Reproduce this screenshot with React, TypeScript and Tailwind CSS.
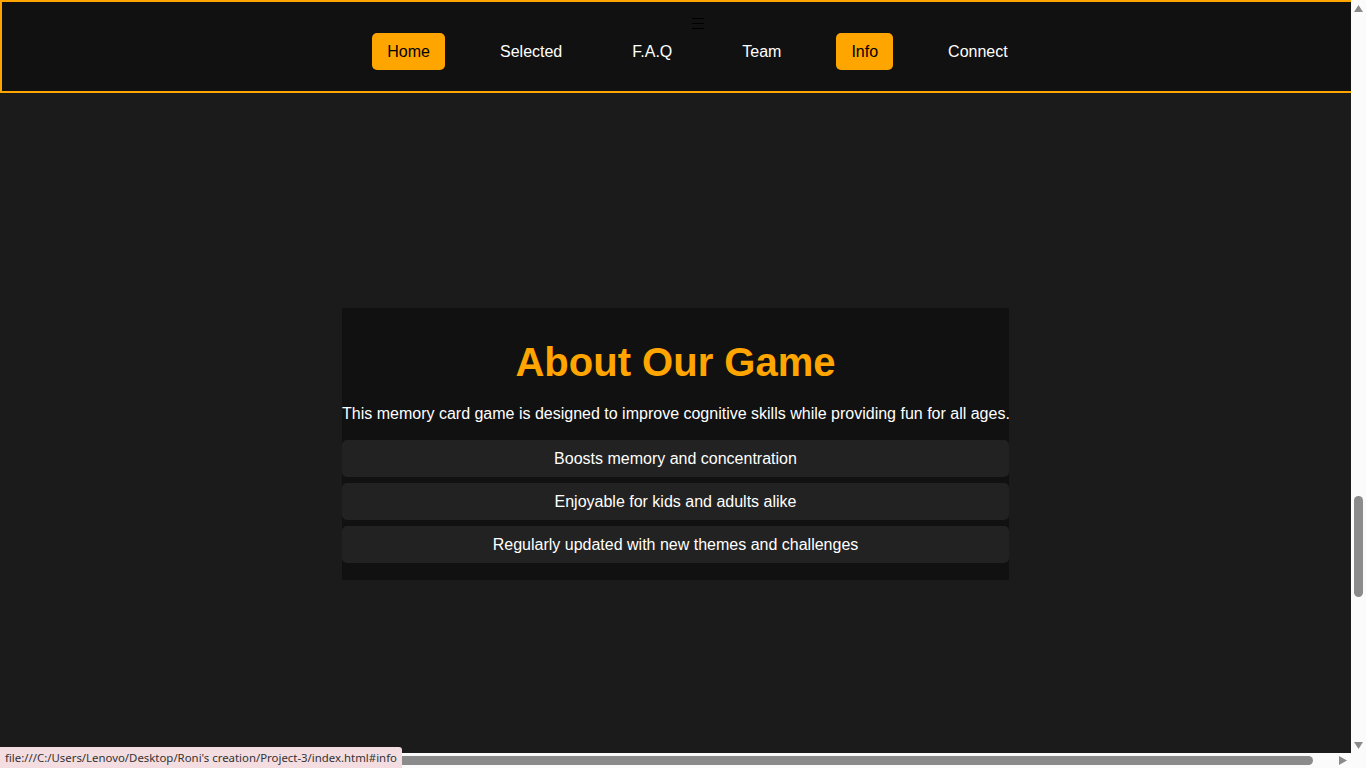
import React from "react";

const navItems = [
  { label: "Home", active: true },
  { label: "Selected", active: false },
  { label: "F.A.Q", active: false },
  { label: "Team", active: false },
  { label: "Info", active: true },
  { label: "Connect", active: false },
];

const features = [
  "Boosts memory and concentration",
  "Enjoyable for kids and adults alike",
  "Regularly updated with new themes and challenges",
];

function Header() {
  return (
    <header className="h-[93px] border-t-2 border-b-2 border-l-2 border-[#ffa500] bg-[#111111] flex flex-col items-center pl-[42px]">
      {/* hamburger, black on black like the original */}
      <div className="mt-[16px] w-[12px] flex flex-col gap-[4px]">
        <span className="block h-px bg-black" />
        <span className="block h-px bg-black" />
        <span className="block h-px bg-black" />
      </div>
      <nav className="mt-[4px] flex gap-[40px]">
        {navItems.map((item) => (
          <a
            key={item.label}
            href={"#" + item.label.toLowerCase()}
            className={
              item.active
                ? "h-[37px] px-[15px] flex items-center rounded-[5px] bg-[#ffa500] text-black text-[16px]"
                : "h-[37px] px-[15px] flex items-center rounded-[5px] text-white text-[16px]"
            }
          >
            {item.label}
          </a>
        ))}
      </nav>
    </header>
  );
}

function About() {
  return (
    <section id="info" className="w-[667px] mx-auto bg-[#111111] pt-[31px] pb-[17px]">
      <h1 className="text-[40px] leading-[46px] font-bold text-[#ffa500] text-center">About Our Game</h1>
      <p className="mt-[20px] text-[16px] leading-[18px] text-white text-center whitespace-nowrap">
        This memory card game is designed to improve cognitive skills while providing fun for all ages.
      </p>
      <ul className="mt-[17px] flex flex-col gap-[6px]">
        {features.map((f) => (
          <li key={f} className="h-[37px] flex items-center justify-center rounded-[5px] bg-[#222222] text-white text-[16px]">
            {f}
          </li>
        ))}
      </ul>
    </section>
  );
}

export default function App() {
  return (
    <div className="relative h-[768px] w-[1366px] overflow-hidden flex flex-col font-['Liberation_Sans',Arial,sans-serif]">
      <div className="flex flex-1">
        <main className="flex-1 bg-[#1b1b1b]">
          <Header />
          <div className="pt-[215px]">
            <About />
          </div>
        </main>
        {/* vertical scrollbar */}
        <div className="w-[15px] bg-[#fbfbfb] flex flex-col items-center">
          <svg width="9" height="7" viewBox="0 0 9 7" className="mt-[5px]">
            <polygon points="4.5,0 9,7 0,7" fill="#8b8b8b" />
          </svg>
          <div className="mt-[484px] w-[9px] h-[101px] rounded-full bg-[#8b8b8b]" />
          <svg width="9" height="7" viewBox="0 0 9 7" className="mt-[145px]">
            <polygon points="0,0 9,0 4.5,7" fill="#8b8b8b" />
          </svg>
        </div>
      </div>
      {/* horizontal scrollbar */}
      <div className="h-[15px] flex bg-[#fbfbfb]">
        <div className="w-[1351px] flex items-center">
          <div className="ml-[2px] w-[1311px] h-[9px] rounded-full bg-[#8b8b8b]" />
          <svg width="8" height="9" viewBox="0 0 8 9" className="ml-[26px]">
            <polygon points="0,0 8,4.5 0,9" fill="#8b8b8b" />
          </svg>
        </div>
      </div>
      {/* status bar link preview */}
      <div className="absolute left-0 bottom-0 h-[21px] w-[402px] pl-[5px] flex items-center bg-[#f4dde0] rounded-tr-[3px] text-[11.4px] text-[#333333] font-['Noto_Sans',sans-serif] whitespace-nowrap overflow-hidden">
        file:///C:/Users/Lenovo/Desktop/Roni's creation/Project-3/index.html#info
      </div>
    </div>
  );
}
